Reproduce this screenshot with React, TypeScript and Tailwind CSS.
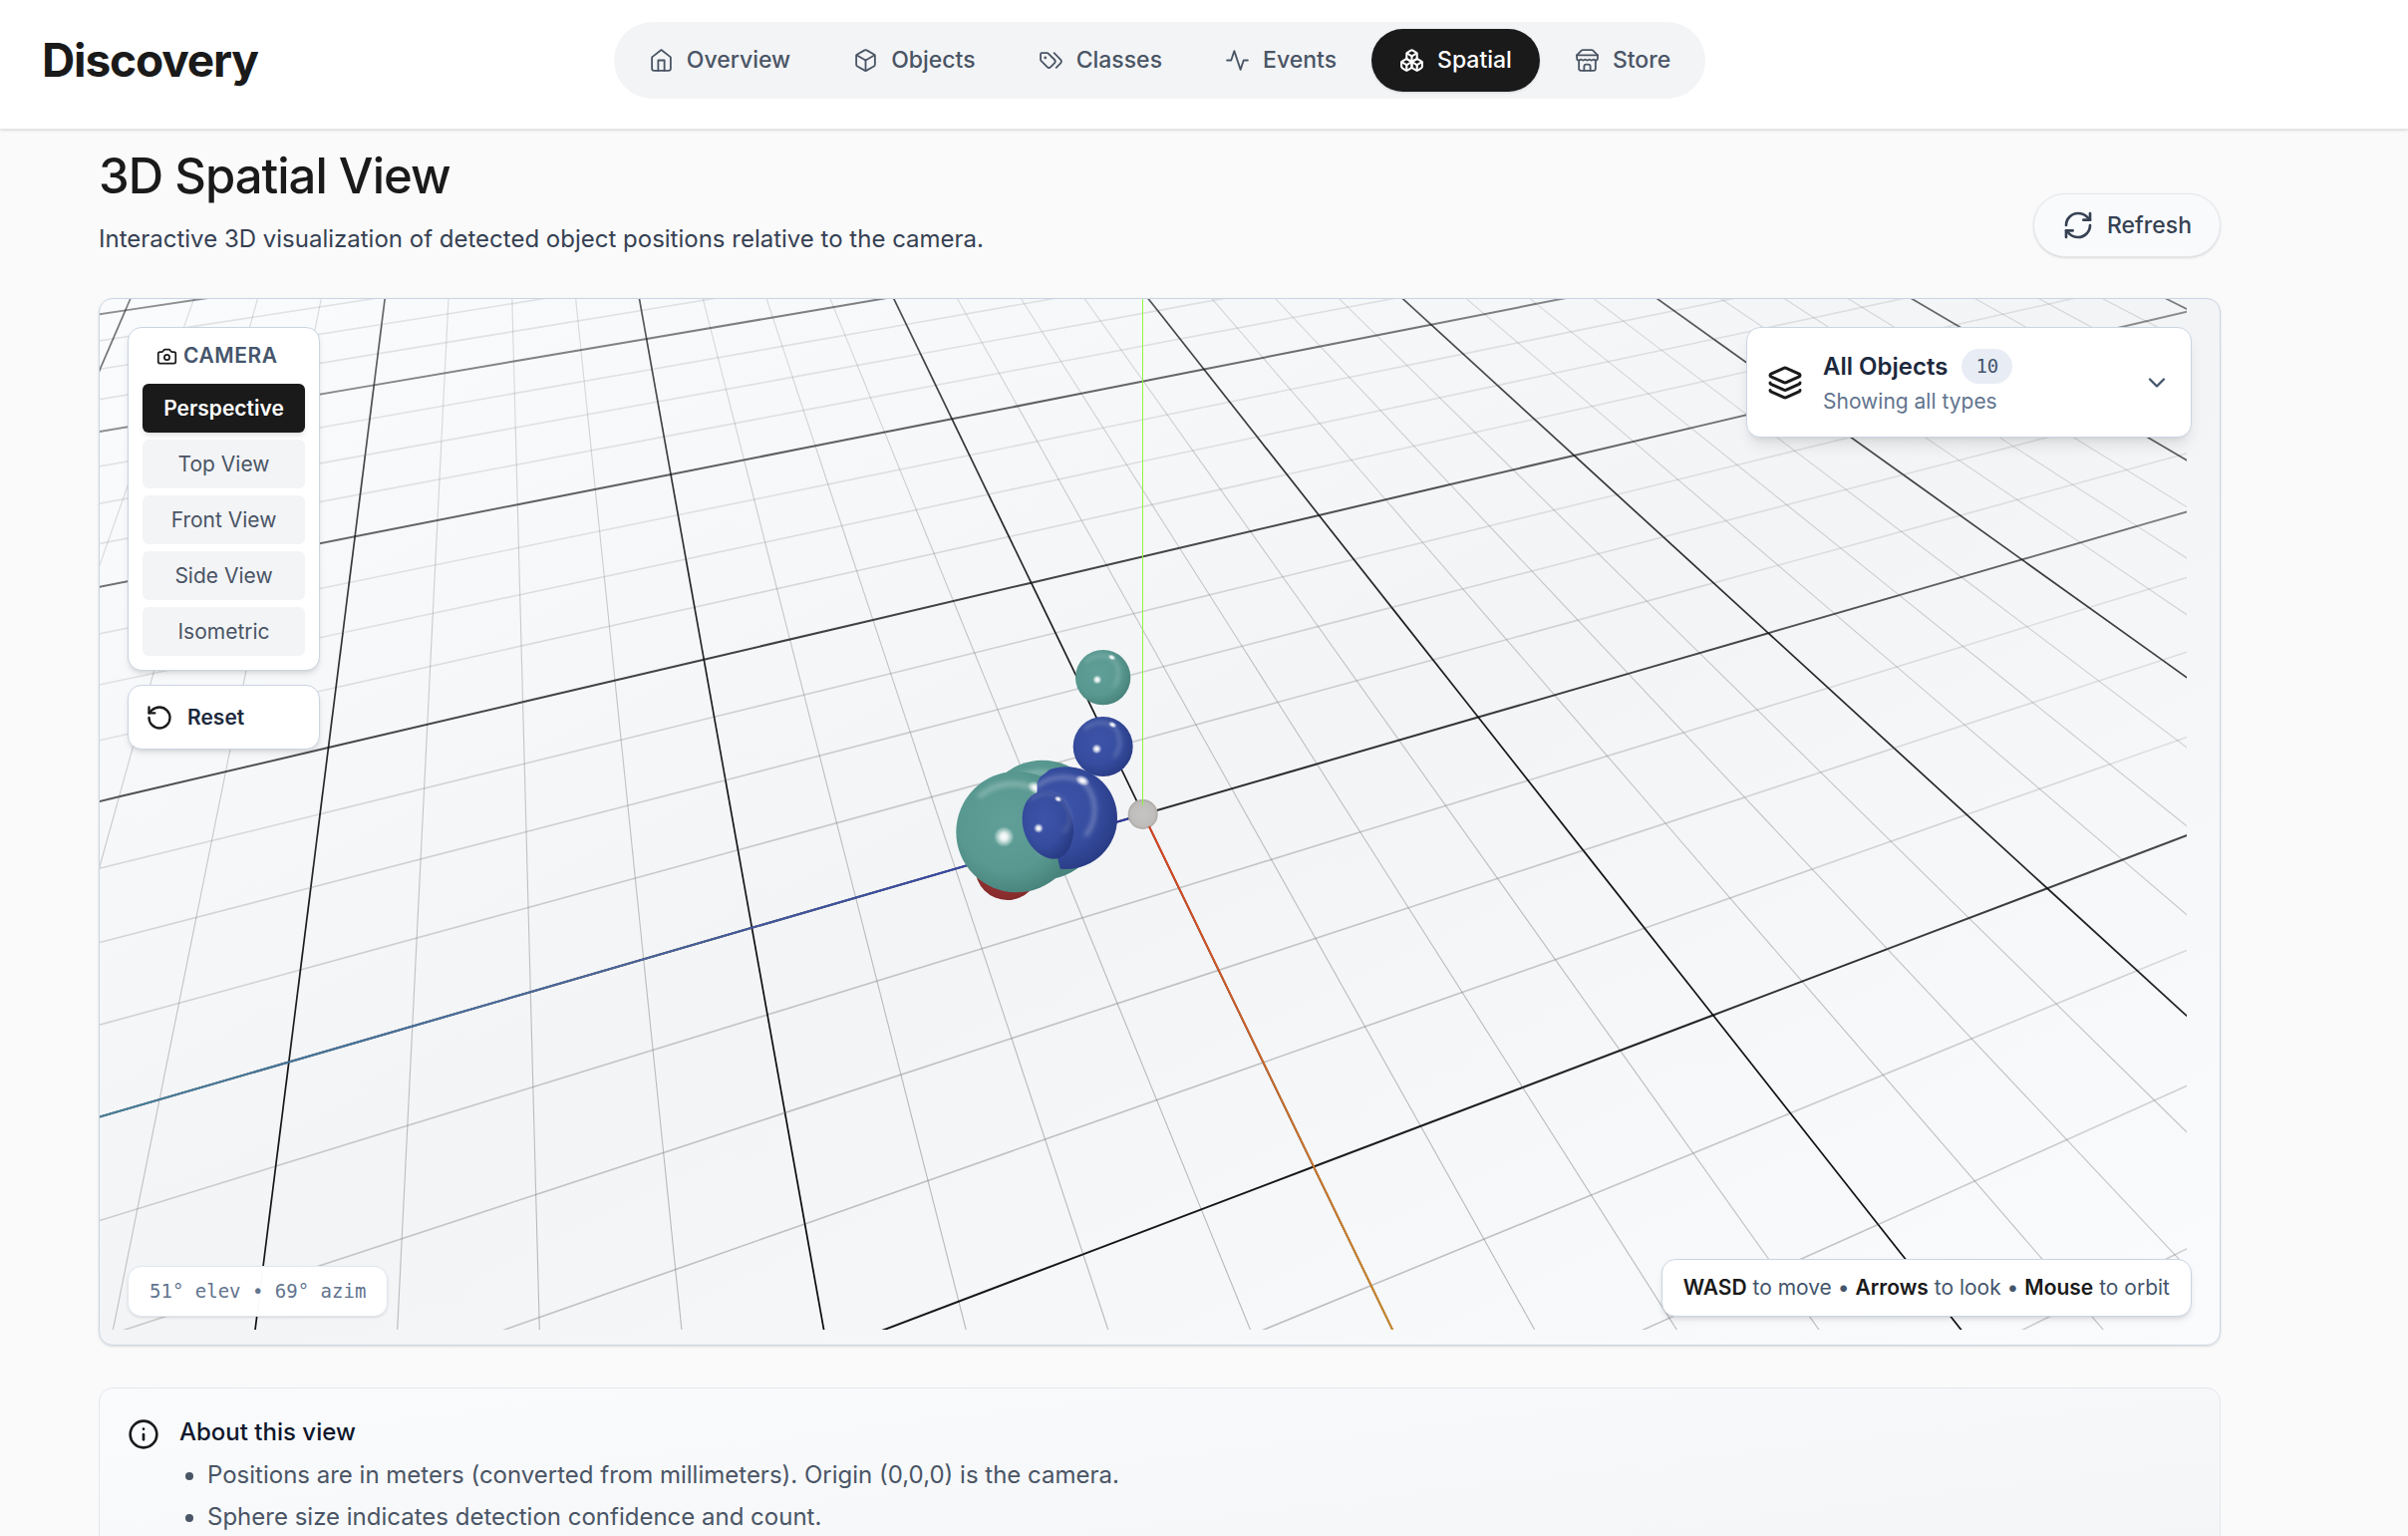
import React from "react";
import { Box, Boxes, Camera, ChevronDown, Info, Layers, RefreshCw, RotateCcw } from "lucide-react";

type IconProps = { size?: number; strokeWidth?: number };

function Glyph({ size = 24, strokeWidth = 2, children }: IconProps & { children: React.ReactNode }) {
  return (
    <svg
      width={size}
      height={size}
      viewBox="0 0 24 24"
      fill="none"
      stroke="currentColor"
      strokeWidth={strokeWidth}
      strokeLinecap="round"
      strokeLinejoin="round"
      aria-hidden="true"
    >
      {children}
    </svg>
  );
}

function HomeIcon(props: IconProps) {
  return (
    <Glyph {...props}>
      <path d="m3 9 9-7 9 7v11a2 2 0 0 1-2 2H5a2 2 0 0 1-2-2z" />
      <polyline points="9 22 9 12 15 12 15 22" />
    </Glyph>
  );
}

function TagsIcon(props: IconProps) {
  return (
    <Glyph {...props}>
      <path d="m15 5 6.3 6.3a2.4 2.4 0 0 1 0 3.4L17 19" />
      <path d="M9.586 5.586A2 2 0 0 0 8.172 5H3a1 1 0 0 0-1 1v5.172a2 2 0 0 0 .586 1.414L8.29 18.29a2.426 2.426 0 0 0 3.42 0l3.58-3.58a2.426 2.426 0 0 0 0-3.42z" />
      <circle cx="6.5" cy="9.5" r=".5" fill="currentColor" />
    </Glyph>
  );
}

function PulseIcon(props: IconProps) {
  return (
    <Glyph {...props}>
      <path d="M22 12h-4l-3 9L9 3l-3 9H2" />
    </Glyph>
  );
}

function StoreIcon(props: IconProps) {
  return (
    <Glyph {...props}>
      <path d="m2 7 4.41-4.41A2 2 0 0 1 7.83 2h8.34a2 2 0 0 1 1.42.59L22 7" />
      <path d="M4 12v8a2 2 0 0 0 2 2h12a2 2 0 0 0 2-2v-8" />
      <path d="M15 22v-4a2 2 0 0 0-2-2h-2a2 2 0 0 0-2 2v4" />
      <path d="M2 7h20" />
      <path d="M22 7v3a2 2 0 0 1-2 2a2.7 2.7 0 0 1-1.59-.63.7.7 0 0 0-.82 0A2.7 2.7 0 0 1 16 12a2.7 2.7 0 0 1-1.59-.63.7.7 0 0 0-.82 0A2.7 2.7 0 0 1 12 12a2.7 2.7 0 0 1-1.59-.63.7.7 0 0 0-.82 0A2.7 2.7 0 0 1 8 12a2.7 2.7 0 0 1-1.59-.63.7.7 0 0 0-.82 0A2.7 2.7 0 0 1 4 12a2 2 0 0 1-2-2V7" />
    </Glyph>
  );
}

const NAV = [
  { label: "Overview", icon: HomeIcon },
  { label: "Objects", icon: Box },
  { label: "Classes", icon: TagsIcon },
  { label: "Events", icon: PulseIcon },
  { label: "Spatial", icon: Boxes, active: true },
  { label: "Store", icon: StoreIcon },
];

const VIEWS = ["Perspective", "Top View", "Front View", "Side View", "Isometric"];

/* ---- Scene projection: orbit camera looking at the origin ---- */
const W = 2094;
const H = 1034;
const FOCAL = 1108;
const DIST = 11.46;
const SIN_E = 0.7742;
const COS_E = 0.633;
const SIN_A = 0.9365;
const COS_A = 0.3507;

function project(u: number, v: number) {
  const a = u * SIN_A + v * COS_A;
  const b = u * COS_A - v * SIN_A;
  const depth = DIST - a * COS_E;
  const ground = DIST * COS_E - a;
  const height = DIST * SIN_E;
  return {
    x: W / 2 + (FOCAL * b) / depth,
    y: H / 2 + (FOCAL * a * SIN_E) / depth,
    depth,
    dist: Math.sqrt(ground * ground + b * b + height * height),
  };
}

function lineOpacity(d: number, major: boolean, across: boolean) {
  if (major) return across ? Math.min(1, Math.max(0.45, 1.3 - 0.038 * d)) : Math.min(1, Math.max(0.5, 1.3 - 0.029 * d));
  return across ? Math.max(0.2, 0.85 - 0.04 * d) : Math.max(0.27, 0.75 - 0.024 * d);
}

type Segment = { x1: number; y1: number; x2: number; y2: number; major: boolean; across: boolean; opacity: number };

function buildGrid(): Segment[] {
  const out: Segment[] = [];
  const R = 28;
  for (let i = -R; i <= R; i++) {
    for (let j = -R; j < R; j += 2) {
      for (const across of [false, true]) {
        const p = across ? project(i, j) : project(j, i);
        const q = across ? project(i, j + 2) : project(j + 2, i);
        if (p.depth < 0.8 || q.depth < 0.8) continue;
        if (Math.max(p.x, q.x) < 0 || Math.min(p.x, q.x) > W) continue;
        if (Math.max(p.y, q.y) < 0 || Math.min(p.y, q.y) > H) continue;
        const major = i % 4 === 0;
        const opacity = lineOpacity((p.dist + q.dist) / 2, major, across);
        out.push({ x1: p.x, y1: p.y, x2: q.x, y2: q.y, major, across, opacity: Math.round(opacity * 100) / 100 });
      }
    }
  }
  return out.sort((m, n) => Number(m.major) - Number(n.major));
}

const GRID = buildGrid();
const X_END = project(7, 0);
const Z_END = project(0, 12);

type Tone = "teal" | "blue" | "red";

function Gloss({ cx, cy, r, front = true }: { cx: number; cy: number; r: number; front?: boolean }) {
  const k = 0.8 * r;
  return (
    <g>
      <path
        d={`M ${cx - k * 0.75} ${cy - k * 0.75} A ${k} ${k * 0.95} 0 0 1 ${cx + k * 0.45} ${cy - k * 0.85} A ${k} ${k} 0 0 1 ${cx + k * 0.5} ${cy + k * 0.4}`}
        fill="none"
        stroke="#ffffff"
        strokeOpacity="0.24"
        strokeWidth={r * 0.09}
        strokeLinecap="round"
        filter="url(#soft)"
      />
      {front && <circle cx={cx - r * 0.21} cy={cy + r * 0.08} r={r * 0.17} fill="url(#spot)" />}
      <ellipse
        cx={cx + r * 0.32}
        cy={cy - r * 0.73}
        rx={r * 0.15}
        ry={r * 0.1}
        transform={`rotate(25 ${cx + r * 0.32} ${cy - r * 0.73})`}
        fill="url(#spot)"
      />
    </g>
  );
}

function Sphere({ cx, cy, r, tone, front }: { cx: number; cy: number; r: number; tone: Tone; front?: boolean }) {
  return (
    <g>
      <circle cx={cx} cy={cy} r={r} fill={`url(#${tone})`} />
      {tone !== "red" && <Gloss cx={cx} cy={cy} r={r} front={front} />}
    </g>
  );
}

function Scene() {
  return (
    <svg viewBox={`0 0 ${W} ${H}`} className="block w-full overflow-hidden" role="img" aria-label="3D scene">
      <defs>
        <radialGradient id="teal" cx="0.42" cy="0.42" r="0.62">
          <stop offset="0" stopColor="#5f9f97" />
          <stop offset="0.65" stopColor="#589890" />
          <stop offset="1" stopColor="#47827a" />
        </radialGradient>
        <radialGradient id="blue" cx="0.42" cy="0.42" r="0.62">
          <stop offset="0" stopColor="#3d53a8" />
          <stop offset="0.6" stopColor="#364d9f" />
          <stop offset="1" stopColor="#293b85" />
        </radialGradient>
        <radialGradient id="red" cx="0.45" cy="0.4" r="0.62">
          <stop offset="0" stopColor="#a83a3a" />
          <stop offset="1" stopColor="#842a2b" />
        </radialGradient>
        <radialGradient id="gray" cx="0.5" cy="0.5" r="0.5">
          <stop offset="0" stopColor="#c5c4c3" />
          <stop offset="0.8" stopColor="#bfbdbb" />
          <stop offset="1" stopColor="#aca8a4" />
        </radialGradient>
        <radialGradient id="spot">
          <stop offset="0" stopColor="#ffffff" />
          <stop offset="0.35" stopColor="#ffffff" stopOpacity="0.85" />
          <stop offset="1" stopColor="#ffffff" stopOpacity="0" />
        </radialGradient>
        <linearGradient id="axisX" gradientUnits="userSpaceOnUse" x1={W / 2} y1={H / 2} x2={W / 2 + 250} y2={H}>
          <stop offset="0" stopColor="#d8401f" />
          <stop offset="0.5" stopColor="#cc6a2c" />
          <stop offset="1" stopColor="#cf8d2c" />
        </linearGradient>
        <linearGradient id="axisZ" gradientUnits="userSpaceOnUse" x1={W / 2} y1={H / 2} x2="0" y2={H / 2 + 300}>
          <stop offset="0" stopColor="#2f38a0" />
          <stop offset="0.5" stopColor="#4a669f" />
          <stop offset="1" stopColor="#47829c" />
        </linearGradient>
        <filter id="soft" x="-20%" y="-20%" width="140%" height="140%">
          <feGaussianBlur stdDeviation="6" />
        </filter>
        <clipPath id="blueCut">
          <path d="M421 556 L430 539 L450 524 L475 500 H700 V840 H497 L484 786 L421 700 Z" />
        </clipPath>
      </defs>

      {GRID.map((s, i) => (
        <line
          key={i}
          x1={s.x1}
          y1={s.y1}
          x2={s.x2}
          y2={s.y2}
          stroke={s.major ? "#0a0a0c" : "#808080"}
          strokeOpacity={s.opacity}
          strokeWidth={s.major ? (s.across ? 2 : 1.7) : s.across ? 1.6 : 1.1}
        />
      ))}

      <line x1={W / 2} y1={H / 2} x2={Z_END.x} y2={Z_END.y} stroke="url(#axisZ)" strokeWidth="2" />

      <g transform="translate(800 300) scale(0.33333)">
        <circle cx="740" cy="651" r="45" fill="url(#gray)" />
        <Sphere cx={620} cy={239} r={83} tone="teal" />
        <Sphere cx={620} cy={447} r={90} tone="blue" />
        <Sphere cx={332} cy={812} r={97} tone="red" />
        <Sphere cx={438} cy={668} r={180} tone="teal" front={false} />
        <Sphere cx={360} cy={704} r={182} tone="teal" />
        <g clipPath="url(#blueCut)">
          <Sphere cx={509} cy={662} r={154} tone="blue" front={false} />
        </g>
        <path
          d="M445 582 C475 583 497 600 510 625 C525 655 532 680 531 703 C529 745 510 785 472 785 C430 785 377 735 377 665 C377 620 400 581 445 582 Z"
          fill="url(#blue)"
        />
        <path
          d="M400 608 C430 580 475 585 500 610 C525 650 530 680 500 705"
          fill="none"
          stroke="#ffffff"
          strokeOpacity="0.22"
          strokeWidth="6"
          filter="url(#soft)"
        />
        <circle cx="426" cy="693" r="15" fill="url(#spot)" />
        <ellipse cx="485" cy="605" rx="12" ry="9" transform="rotate(25 485 605)" fill="url(#spot)" />
      </g>

      <line
        x1={W / 2 - 1}
        y1="0"
        x2={W / 2 - 1}
        y2={H / 2 - 9}
        stroke="#8ff53f"
        strokeWidth="1"
        shapeRendering="crispEdges"
      />
      <line x1={W / 2 + 6} y1={H / 2 + 12} x2={X_END.x} y2={X_END.y} stroke="url(#axisX)" strokeWidth="2" />
    </svg>
  );
}

function CameraPanel() {
  return (
    <div className="absolute top-7 left-7 flex w-[193px] flex-col gap-3.5">
      <div className="flex flex-col gap-[7px] rounded-[14px] border border-slate-300 bg-white p-3.5 shadow-md">
        <div className="mb-[7px] flex h-7 items-center gap-1.5 pl-3.5">
          <Camera size={21} className="text-[#1a1a1a]" />
          <h2 className="text-[21px] leading-7 font-semibold tracking-wide text-slate-600">CAMERA</h2>
        </div>
        {VIEWS.map((v, i) => (
          <button
            key={v}
            type="button"
            className={
              i === 0
                ? "h-[49px] rounded-md bg-[#1a1a1a] text-[21px] font-semibold text-white shadow-md"
                : "h-[49px] rounded-md bg-gray-100 text-[21px] text-gray-600"
            }
          >
            {v}
          </button>
        ))}
      </div>
      <button
        type="button"
        className="flex h-[65px] items-center gap-3.5 rounded-[14px] border border-slate-300 bg-white pl-[17px] text-[21px] font-semibold text-slate-800 shadow-md"
      >
        <RotateCcw size={28} className="text-[#1a1a1a]" />
        Reset
      </button>
    </div>
  );
}

export default function App() {
  return (
    <div className="flex h-screen flex-col overflow-hidden bg-[#fafafa] font-['Inter',sans-serif] text-[#1a1a1a]">
      <header className="relative z-10 shrink-0 border-b border-gray-200 bg-white pr-[89px] shadow-sm">
        <div className="flex h-[129px] items-start px-[42px] pt-[22px]">
          <div className="flex h-[75px] flex-1 items-center">
            <a href="#" className="text-[46px] leading-none font-bold tracking-tight">
              Discovery
            </a>
          </div>
          <nav className="flex gap-[7px] rounded-full bg-gray-100 p-[7px]">
            {NAV.map(({ label, icon: Icon, active }) => (
              <a
                key={label}
                href="#"
                className={
                  active
                    ? "flex h-[63px] items-center gap-[13px] rounded-full bg-[#1a1a1a] px-7 text-[23px] font-medium text-white shadow-sm"
                    : "flex h-[63px] items-center gap-[13px] rounded-full px-7 text-[23px] font-medium text-gray-600"
                }
              >
                <Icon size={25} strokeWidth={active ? 2 : 1.75} />
                {label}
              </a>
            ))}
          </nav>
          <div className="flex-1" />
        </div>
      </header>

      <main className="pr-[89px]">
        <div className="px-[99px] pt-[17px]">
          <div className="flex items-end justify-between">
            <div>
              <h1 className="text-[49px] leading-[59px] font-medium tracking-[-0.02em]">3D Spatial View</h1>
              <p className="mt-4 text-2xl leading-9 text-gray-700">
                Interactive 3D visualization of detected object positions relative to the camera.
              </p>
            </div>
            <button
              type="button"
              className="flex h-16 items-center gap-[13px] rounded-full border border-gray-200 bg-slate-50 px-7 text-[23px] font-medium text-gray-700 shadow-sm"
            >
              <RefreshCw size={32} />
              Refresh
            </button>
          </div>

          <section className="relative mt-[41px] overflow-hidden rounded-[14px] border border-slate-300 bg-linear-to-br from-[#fafbfd] via-gray-100 to-[#fafbfd] pr-[33px] pb-[15px] shadow-sm">
            <Scene />
            <CameraPanel />

            <button
              type="button"
              className="absolute top-7 right-7 flex h-[111px] w-[447px] items-center rounded-[14px] border border-slate-300 bg-white px-5 text-left shadow-lg"
            >
              <Layers size={36} className="text-[#1a1a1a]" />
              <span className="ml-5 flex flex-1 flex-col pt-1">
                <span className="flex items-center gap-3.5">
                  <span className="text-2xl font-semibold text-slate-800">All Objects</span>
                  <span className="flex h-[35px] items-center rounded-full bg-[#e8edf5] px-3.5 font-['DejaVu_Sans_Mono',monospace] text-[19px] text-slate-600">
                    10
                  </span>
                </span>
                <span className="text-[21px] leading-9 text-slate-500">Showing all types</span>
              </span>
              <ChevronDown size={28} className="text-slate-600" />
            </button>

            <div className="absolute bottom-7 left-7 flex h-[51px] items-center rounded-[14px] border border-slate-200 bg-white/98 px-[21px] font-['DejaVu_Sans_Mono',monospace] text-[19px] text-slate-500 shadow-sm">
              51° elev • 69° azim
            </div>

            <div className="absolute right-7 bottom-7 flex h-[58px] items-center rounded-[14px] border border-slate-300 bg-white px-[21px] shadow-md">
              <p className="text-[21px] text-slate-600">
                <strong className="font-semibold text-[#1a1a1a]">WASD</strong> to move •{" "}
                <strong className="font-semibold text-[#1a1a1a]">Arrows</strong> to look •{" "}
                <strong className="font-semibold text-[#1a1a1a]">Mouse</strong> to orbit
              </p>
            </div>
          </section>

          <section className="mt-[42px] flex gap-5 rounded-[14px] border border-gray-200 bg-linear-to-br from-[#fafbfd] to-gray-100 px-7 pt-[26px] pb-28">
            <Info size={32} className="mt-1 shrink-0" />
            <div>
              <h2 className="text-2xl leading-9 font-medium text-slate-900">About this view</h2>
              <ul className="mt-1 list-disc pl-7 text-2xl leading-[42px] text-gray-600">
                <li>Positions are in meters (converted from millimeters). Origin (0,0,0) is the camera.</li>
                <li>Sphere size indicates detection confidence and count.</li>
              </ul>
            </div>
          </section>
        </div>
      </main>
    </div>
  );
}
